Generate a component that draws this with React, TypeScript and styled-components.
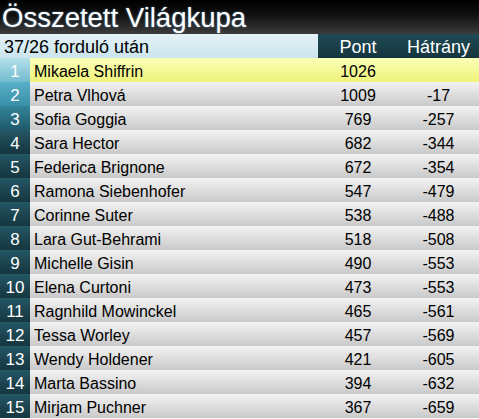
import React, { FC } from 'react';
import { styled, createGlobalStyle } from 'styled-components';

const GlobalStyle = createGlobalStyle`
  html, body {
    margin: 0;
    padding: 0;
    background: #ffffff;
  }
  body {
    font-family: "Liberation Sans", Arial, sans-serif;
  }
`;

type Racer = {
  name: string,
  points: number,
  gap: string,
};

const racers: Racer[] = [
  { name: 'Mikaela Shiffrin', points: 1026, gap: '' },
  { name: 'Petra Vlhová', points: 1009, gap: '-17' },
  { name: 'Sofia Goggia', points: 769, gap: '-257' },
  { name: 'Sara Hector', points: 682, gap: '-344' },
  { name: 'Federica Brignone', points: 672, gap: '-354' },
  { name: 'Ramona Siebenhofer', points: 547, gap: '-479' },
  { name: 'Corinne Suter', points: 538, gap: '-488' },
  { name: 'Lara Gut-Behrami', points: 518, gap: '-508' },
  { name: 'Michelle Gisin', points: 490, gap: '-553' },
  { name: 'Elena Curtoni', points: 473, gap: '-553' },
  { name: 'Ragnhild Mowinckel', points: 465, gap: '-561' },
  { name: 'Tessa Worley', points: 457, gap: '-569' },
  { name: 'Wendy Holdener', points: 421, gap: '-605' },
  { name: 'Marta Bassino', points: 394, gap: '-632' },
  { name: 'Mirjam Puchner', points: 367, gap: '-659' },
];

const rankShades = [
  ['#b4dfea', '#72bccf'],
  ['#58afc6', '#3a8fa8'],
  ['#33849a', '#1f5a69'],
];
const darkShade = ['#245663', '#15363f'];

const Board = styled.div`
  width: 479px;
  height: 419px;
  overflow: hidden;
  display: flex;
  flex-direction: column;
`;

const TitleBar = styled.div`
  height: 34px;
  box-sizing: border-box;
  padding: 2px 0 0 2px;
  background: linear-gradient(#000000 0%, #111111 45%, #3c3c3c 100%);
  color: #ffffff;
  font-size: 27.5px;
  line-height: 31px;
  text-shadow: 0 0 2px #5f8fb0;
`;

const Row = styled.div`
  display: grid;
  grid-template-columns: 30px 288px 80px 81px;
  grid-template-rows: 24px;
  height: 24px;
  font-size: 16px;
  line-height: 20px;
  & > div {
    box-sizing: border-box;
    height: 24px;
    padding-top: 4px;
  }
`;

const SubTitle = styled.div`
  grid-column: 1 / 3;
  padding-left: 4px;
  font-size: 18px;
  padding-top: 3px !important;
  color: #000000;
  background: linear-gradient(#e4f2f7, #cbe5ee);
`;

const HeadCell = styled.div`
  text-align: center;
  font-size: 18px;
  padding-top: 3px !important;
  color: #ffffff;
  background: linear-gradient(#1f4a55, #15353e);
`;

const RankCell = styled.div<{ $top: string, $bottom: string }>`
  text-align: center;
  color: #ffffff;
  font-size: 17px;
  background: linear-gradient(${(p) => p.$top}, ${(p) => p.$bottom});
`;

const Cell = styled.div<{ $lead?: boolean, $center?: boolean }>`
  color: #000000;
  padding-left: ${(p) => (p.$center ? '0' : '4px')};
  text-align: ${(p) => (p.$center ? 'center' : 'left')};
  background: ${(p) => (p.$lead
    ? 'linear-gradient(#fbffb8, #eef27a)'
    : 'linear-gradient(#f3f3f3, #c9c9c9)')};
`;

const RacerRow: FC<{ racer: Racer, index: number }> = ({ racer, index }) => {
  const [top, bottom] = rankShades[index] || darkShade;
  const lead = index === 0;
  return (
    <Row>
      <RankCell $top={top} $bottom={bottom}>{index + 1}</RankCell>
      <Cell $lead={lead}>{racer.name}</Cell>
      <Cell $lead={lead} $center>{racer.points}</Cell>
      <Cell $lead={lead} $center>{racer.gap}</Cell>
    </Row>
  );
};

export default function App() {
  return (
    <>
      <GlobalStyle />
      <Board>
        <TitleBar>Összetett Világkupa</TitleBar>
        <Row>
          <SubTitle>37/26 forduló után</SubTitle>
          <HeadCell>Pont</HeadCell>
          <HeadCell>Hátrány</HeadCell>
        </Row>
        {racers.map((r, i) => <RacerRow key={r.name} racer={r} index={i} />)}
      </Board>
    </>
  );
}
